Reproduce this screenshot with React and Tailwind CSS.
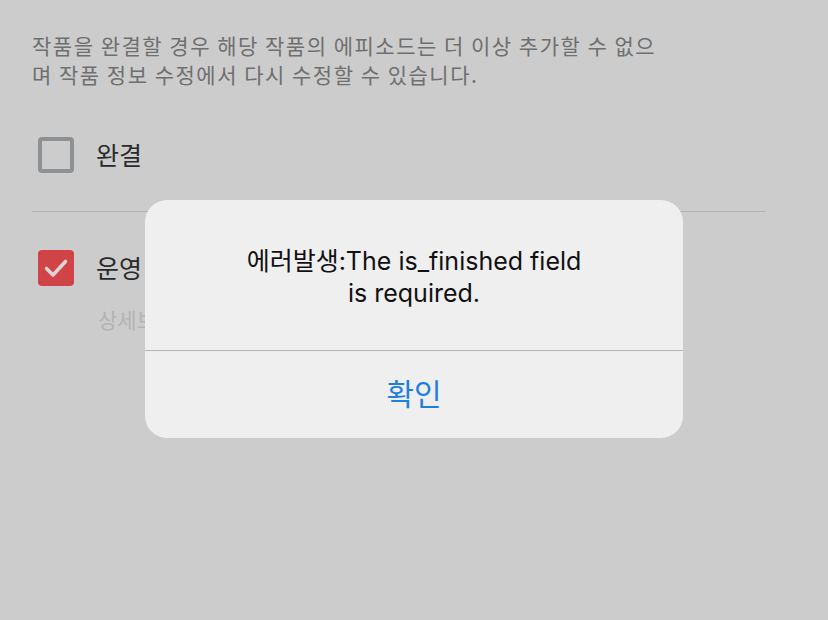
const FONT = { fontFamily: '"Noto Sans CJK KR", "Noto Sans", sans-serif' }
const ALERT_FONT = { fontFamily: 'Inter, "Noto Sans CJK KR", sans-serif' }

function CheckBox({ checked }) {
  if (checked) {
    return (
      <div className="w-[36px] h-[36px] rounded-[4px] bg-[#d04447] flex items-center justify-center flex-shrink-0">
        <svg width="26" height="26" viewBox="0 0 26 26" fill="none">
          <path d="M3.5 13.5 L10 20 L22.5 6.5" stroke="#ddd3d3" strokeWidth="3.6" strokeLinecap="round" strokeLinejoin="round" />
        </svg>
      </div>
    )
  }
  return <div className="w-[36px] h-[36px] rounded-[4px] border-[4px] border-[#8e9194] flex-shrink-0" />
}

export default function App() {
  return (
    <div className="w-[828px] h-[620px] bg-[#cccccc] relative overflow-hidden" style={FONT}>
      {/* Page under the dim */}
      <div className="pl-[32px] pt-[31px] w-[766px]">
        <p className="text-[21px] leading-[29px] tracking-[1.5px] text-[#6f6f6f] whitespace-nowrap">
          작품을 완결할 경우 해당 작품의 에피소드는 더 이상 추가할 수 없으
          <br />
          며 작품 정보 수정에서 다시 수정할 수 있습니다.
        </p>

        <div className="flex items-center gap-[22px] pl-[6px] mt-[48px] h-[36px]">
          <CheckBox />
          <span className="text-[25px] text-[#2a2a2a]">완결</span>
        </div>

        <div className="h-px bg-[#b2b2b2] mt-[38px]" />

        <div className="flex items-center gap-[22px] pl-[6px] mt-[38px] h-[36px]">
          <CheckBox checked />
          <span className="text-[25px] text-[#2a2a2a]">운영</span>
        </div>
        <p className="pl-[66px] mt-[18px] text-[21px] text-[#b3b3b3]">상세보기</p>
      </div>

      {/* Alert */}
      <div className="absolute left-[145px] top-[200px] w-[538px] h-[238px] rounded-[22px] bg-[#efefef] flex flex-col" style={ALERT_FONT}>
        <div className="h-[150px] flex items-center justify-center pt-[4px]">
          <p className="text-[25px] leading-[32px] text-[#111] text-center">
            에러발생:The is_finished field
            <br />
            is required.
          </p>
        </div>
        <div className="h-px bg-[#b4b4b4]" />
        <div className="flex-1 flex items-center justify-center">
          <span className="text-[30px] text-[#1f7fe0]">확인</span>
        </div>
      </div>
    </div>
  )
}
